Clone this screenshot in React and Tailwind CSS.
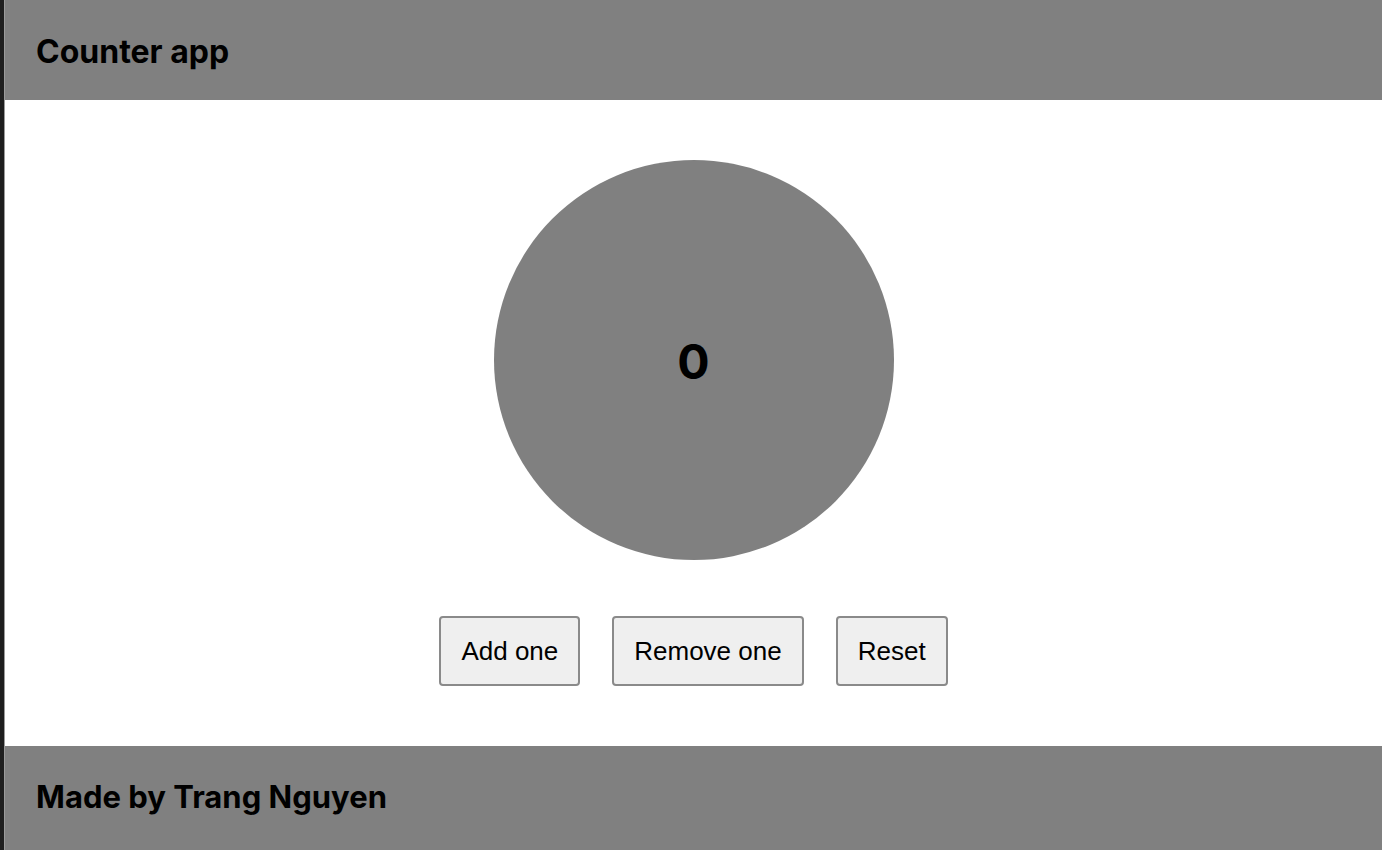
export default function App() {
  const btn =
    "h-[70px] px-5 bg-[#efefef] border-2 border-[#8a8a8a] rounded-[4px] text-[26px] text-black leading-none";
  return (
    <div className="flex w-[1382px] h-[850px] overflow-hidden bg-white" style={{ fontFamily: '"Liberation Sans", Arial, sans-serif' }}>
      <div className="w-[4px] shrink-0 bg-[#1e1e1e]" />
      <div className="w-[1px] shrink-0 bg-[#9a9a9a]" />
      <div className="flex-1 flex flex-col">
        <header className="h-[100px] shrink-0 bg-[#808080] flex items-center pl-[31px] pt-[3px]">
          <h1 className="text-[32px] font-bold text-black" style={{ fontFamily: 'Inter, "Liberation Sans", sans-serif' }}>Counter app</h1>
        </header>
        <main className="h-[646px] shrink-0 flex flex-col items-center pt-[60px]">
          <div className="w-[400px] h-[400px] rounded-full bg-[#808080] flex items-center justify-center">
            <span className="text-[48px] font-bold text-black pt-[3px]" style={{ fontFamily: 'Inter, "Liberation Sans", sans-serif' }}>0</span>
          </div>
          <div className="flex gap-[32px] mt-[56px]">
            <button className={btn}>Add one</button>
            <button className={btn}>Remove one</button>
            <button className={btn}>Reset</button>
          </div>
        </main>
        <footer className="h-[104px] shrink-0 bg-[#808080] flex items-center pl-[31px] pb-[2px]">
          <h2 className="text-[31px] font-bold text-black" style={{ fontFamily: 'Inter, "Liberation Sans", sans-serif' }}>Made by Trang Nguyen</h2>
        </footer>
      </div>
    </div>
  );
}
